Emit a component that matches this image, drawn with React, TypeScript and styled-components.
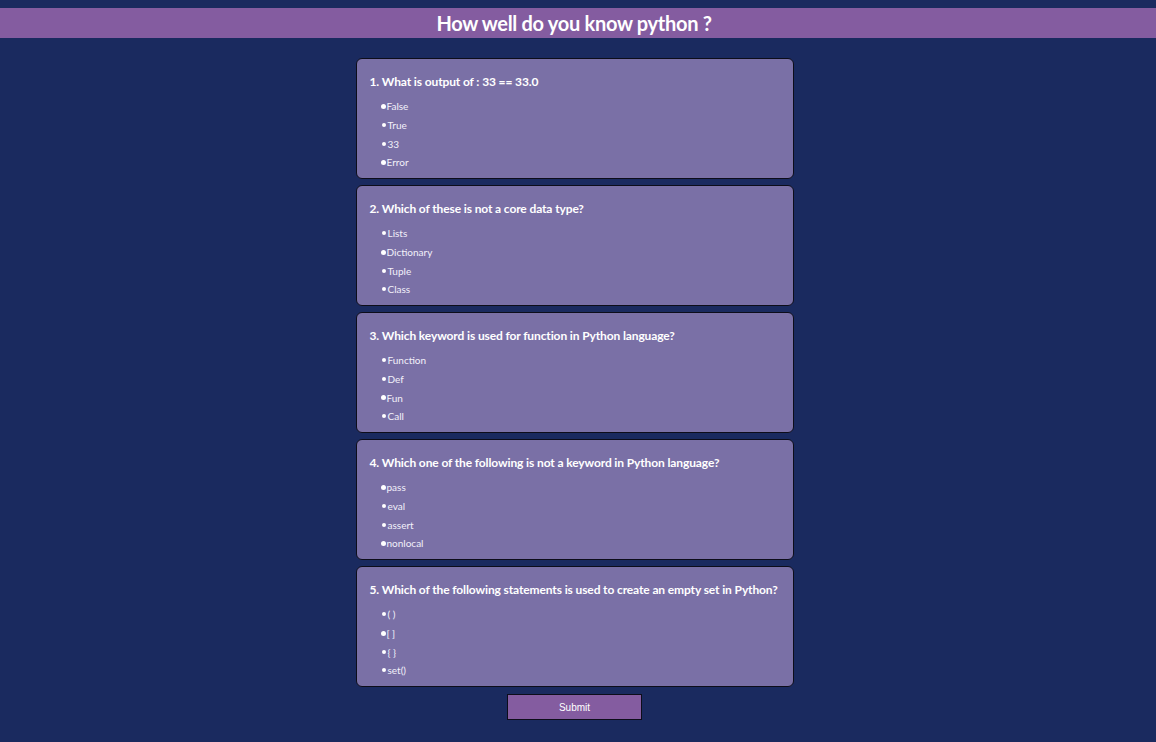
import React from "react";
import styled, { createGlobalStyle } from "styled-components";

const Global = createGlobalStyle`
  html, body { margin: 0; padding: 0; }
  body {
    background: #1a2a5f;
    padding: 8px 0 0;
    font-family: Lato, "Noto Sans", sans-serif;
  }
`;

const Header = styled.h1`
  margin: 0;
  height: 30px;
  padding-right: 8px;
  background: #845ca0;
  color: #ffffff;
  font-family: Lato, sans-serif;
  font-weight: 700;
  font-size: 20px;
  letter-spacing: -0.3px;
  line-height: 30px;
  text-align: center;
`;

const Main = styled.main`
  display: flex;
  flex-direction: column;
  align-items: center;
  gap: 6px;
  padding: 20px 7px 0 0;
`;

const Card = styled.section`
  box-sizing: border-box;
  width: 438px;
  height: 121px;
  background: #7a70a6;
  border: 1px solid #0d0d1a;
  border-radius: 6px;
  padding: 15px 13px 0;
  color: #ffffff;
`;

const Question = styled.h2`
  margin: 0 0 7px;
  font-size: 12px;
  font-weight: 700;
  letter-spacing: -0.12px;
  line-height: 16px;
`;

const Options = styled.ul`
  list-style: none;
  margin: 0;
  padding: 0 0 0 10px;
  display: flex;
  flex-direction: column;
`;

const Option = styled.li`
  display: flex;
  align-items: center;
  height: 18.7px;
  font-size: 10px;
  color: #f2f0fa;
`;

const Dot = styled.span<{ $big?: boolean }>`
  display: inline-block;
  width: ${(p) => (p.$big ? 5 : 4)}px;
  height: ${(p) => (p.$big ? 5 : 4)}px;
  border-radius: 50%;
  background: #ffffff;
  margin-right: ${(p) => (p.$big ? 1 : 2)}px;
  margin-left: ${(p) => (p.$big ? 1 : 2)}px;
`;

const Submit = styled.button`
  margin-top: 1px;
  width: 135px;
  height: 26px;
  background: #845ca0;
  border: 1px solid #0d0d1a;
  color: #ffffff;
  font-family: "Liberation Sans", Arial, sans-serif;
  font-size: 10px;
  cursor: pointer;
`;

const quiz: { q: string; opts: [string, boolean][] }[] = [
  { q: "1. What is output of : 33 == 33.0", opts: [["False", true], ["True", false], ["33", false], ["Error", true]] },
  { q: "2. Which of these is not a core data type?", opts: [["Lists", false], ["Dictionary", true], ["Tuple", false], ["Class", false]] },
  { q: "3. Which keyword is used for function in Python language?", opts: [["Function", false], ["Def", false], ["Fun", true], ["Call", false]] },
  { q: "4. Which one of the following is not a keyword in Python language?", opts: [["pass", true], ["eval", false], ["assert", false], ["nonlocal", true]] },
  { q: "5. Which of the following statements is used to create an empty set in Python?", opts: [["( )", false], ["[ ]", true], ["{ }", false], ["set()", false]] },
];

export default function App() {
  return (
    <>
      <Global />
      <Header>How well do you know python ?</Header>
      <Main>
        {quiz.map((item) => (
          <Card key={item.q}>
            <Question>{item.q}</Question>
            <Options>
              {item.opts.map(([o, big]) => (
                <Option key={o}>
                  <Dot $big={big} />
                  {o}
                </Option>
              ))}
            </Options>
          </Card>
        ))}
        <Submit>Submit</Submit>
      </Main>
    </>
  );
}
